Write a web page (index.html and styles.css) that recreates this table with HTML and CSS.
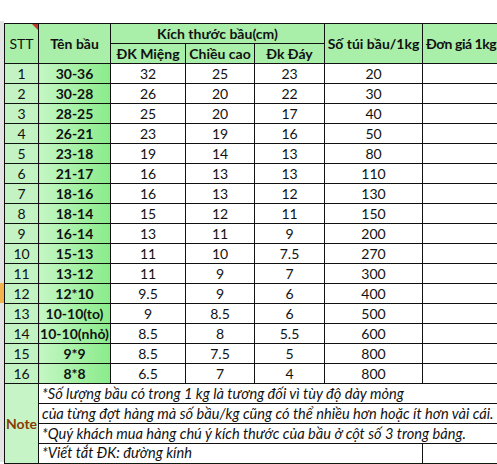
FILE: index.html
```html
<!DOCTYPE html>
<html lang="vi">
<head>
<meta charset="utf-8">
<title>Bảng kích thước bầu</title>
<link rel="stylesheet" href="styles.css">
</head>
<body>
<div class="sheet">
  <div class="gutter"></div>
  <table class="grid">
    <colgroup>
      <col class="c-stt"><col class="c-name"><col class="c-mieng"><col class="c-cao"><col class="c-day"><col class="c-so"><col class="c-gia">
    </colgroup>
    <thead>
      <tr>
        <th rowspan="2" class="h-stt">STT<span class="flag"></span></th>
        <th rowspan="2" class="h-bold">Tên bầu</th>
        <th colspan="3" class="h-bold">Kích thước bầu(cm)</th>
        <th rowspan="2" class="h-bold">Số túi bầu/1kg</th>
        <th rowspan="2" class="h-bold h-gia">Đơn giá 1kg</th>
      </tr>
      <tr>
        <th class="h-bold">ĐK Miệng</th>
        <th class="h-bold">Chiều cao</th>
        <th class="h-bold">Đk Đáy</th>
      </tr>
    </thead>
    <tbody>
      <tr><td class="stt">1</td><td class="name">30-36</td><td>32</td><td>25</td><td>23</td><td>20</td><td></td></tr>
      <tr><td class="stt">2</td><td class="name">30-28</td><td>26</td><td>20</td><td>22</td><td>30</td><td></td></tr>
      <tr><td class="stt">3</td><td class="name">28-25</td><td>25</td><td>20</td><td>17</td><td>40</td><td></td></tr>
      <tr><td class="stt">4</td><td class="name">26-21</td><td>23</td><td>19</td><td>16</td><td>50</td><td></td></tr>
      <tr><td class="stt">5</td><td class="name">23-18</td><td>19</td><td>14</td><td>13</td><td>80</td><td></td></tr>
      <tr><td class="stt">6</td><td class="name">21-17</td><td>16</td><td>13</td><td>13</td><td>110</td><td></td></tr>
      <tr><td class="stt">7</td><td class="name">18-16</td><td>16</td><td>13</td><td>12</td><td>130</td><td></td></tr>
      <tr><td class="stt">8</td><td class="name">18-14</td><td>15</td><td>12</td><td>11</td><td>150</td><td></td></tr>
      <tr><td class="stt">9</td><td class="name">16-14</td><td>13</td><td>11</td><td>9</td><td>200</td><td></td></tr>
      <tr><td class="stt">10</td><td class="name">15-13</td><td>11</td><td>10</td><td>7.5</td><td>270</td><td></td></tr>
      <tr><td class="stt">11</td><td class="name">13-12</td><td>11</td><td>9</td><td>7</td><td>300</td><td></td></tr>
      <tr><td class="stt">12</td><td class="name">12*10</td><td>9.5</td><td>9</td><td>6</td><td>400</td><td></td></tr>
      <tr><td class="stt">13</td><td class="name">10-10(to)</td><td>9</td><td>8.5</td><td>6</td><td>500</td><td></td></tr>
      <tr><td class="stt">14</td><td class="name">10-10(nhỏ)</td><td>8.5</td><td>8</td><td>5.5</td><td>600</td><td></td></tr>
      <tr><td class="stt">15</td><td class="name">9*9</td><td>8.5</td><td>7.5</td><td>5</td><td>800</td><td></td></tr>
      <tr><td class="stt">16</td><td class="name">8*8</td><td>6.5</td><td>7</td><td>4</td><td>800</td><td></td></tr>
      <tr class="note-row">
        <td rowspan="4" class="note-label">Note</td>
        <td colspan="6" class="note">*Số lượng bầu có trong 1 kg là tương đối vì tùy độ dày mỏng</td>
      </tr>
      <tr class="note-row"><td colspan="6" class="note">của từng đợt hàng mà số bầu/kg cũng có thể nhiều hơn hoặc ít hơn vài cái.</td></tr>
      <tr class="note-row"><td colspan="6" class="note">*Quý khách mua hàng chú ý kích thước của bầu ở cột số 3 trong bảng.</td></tr>
      <tr class="note-row last"><td colspan="5" class="note">*Viết tắt ĐK: đường kính</td><td class="note-end"></td></tr>
    </tbody>
  </table>
</div>
</body>
</html>
```
FILE: styles.css
```css
html, body {
  margin: 0;
  padding: 0;
  background: #ffffff;
  overflow: hidden;
}

.sheet {
  display: flex;
  align-items: flex-start;
  padding-top: 23px;
  width: 560px;
  font-family: Lato, "Open Sans", "Noto Sans", sans-serif;
  color: #111;
}

.gutter {
  width: 4px;
  height: 441px;
  margin-top: -2px;
  flex: none;
  background: linear-gradient(to bottom, #e4e4e4 0, #e4e4e4 262px, #f2b34a 262px, #f2b34a 282px, #e4e4e4 282px);
}

.grid {
  border-collapse: collapse;
  table-layout: fixed;
  font-size: 14px;
}

.c-stt { width: 34px; }
.c-name { width: 72px; }
.c-mieng { width: 75px; }
.c-cao { width: 69px; }
.c-day { width: 70px; }
.c-so { width: 98px; }
.c-gia { width: 100px; }

.grid tr { height: 20px; }

.grid th,
.grid td {
  border: 1px solid #111;
  padding: 0;
  line-height: 18px;
  text-align: center;
  white-space: nowrap;
  overflow: hidden;
}

.grid th {
  background: #a9efa9;
  font-weight: normal;
  color: #111;
}

.grid th.h-bold { font-weight: bold; }
.grid th.h-gia {
  text-align: left;
  padding-left: 3px;
  letter-spacing: -0.45px;
}

.h-stt { position: relative; }

.flag {
  position: absolute;
  top: 0;
  right: 0;
  width: 0;
  height: 0;
  border-top: 6px solid #c0392b;
  border-left: 6px solid transparent;
}

.grid td { background: #ffffff; }

.grid td.stt { background: #c3f3c3; }

.grid td.name {
  font-weight: bold;
  background: linear-gradient(to right, #c4f6c4, #8aeb8a);
}

.grid td.note-label {
  background: #c6f4c6;
  color: #8a3b06;
  font-weight: bold;
  font-size: 14px;
}

.grid td.note {
  text-align: left;
  padding-left: 3px;
  font-style: italic;
  font-size: 14.6px;
}

.grid tr.last td {
  border-bottom: 2px solid #0d1a0d;
}

.grid tr.last td.note-end {
  border-left: 1px solid #d8d8d8;
  border-right: none;
}
```
